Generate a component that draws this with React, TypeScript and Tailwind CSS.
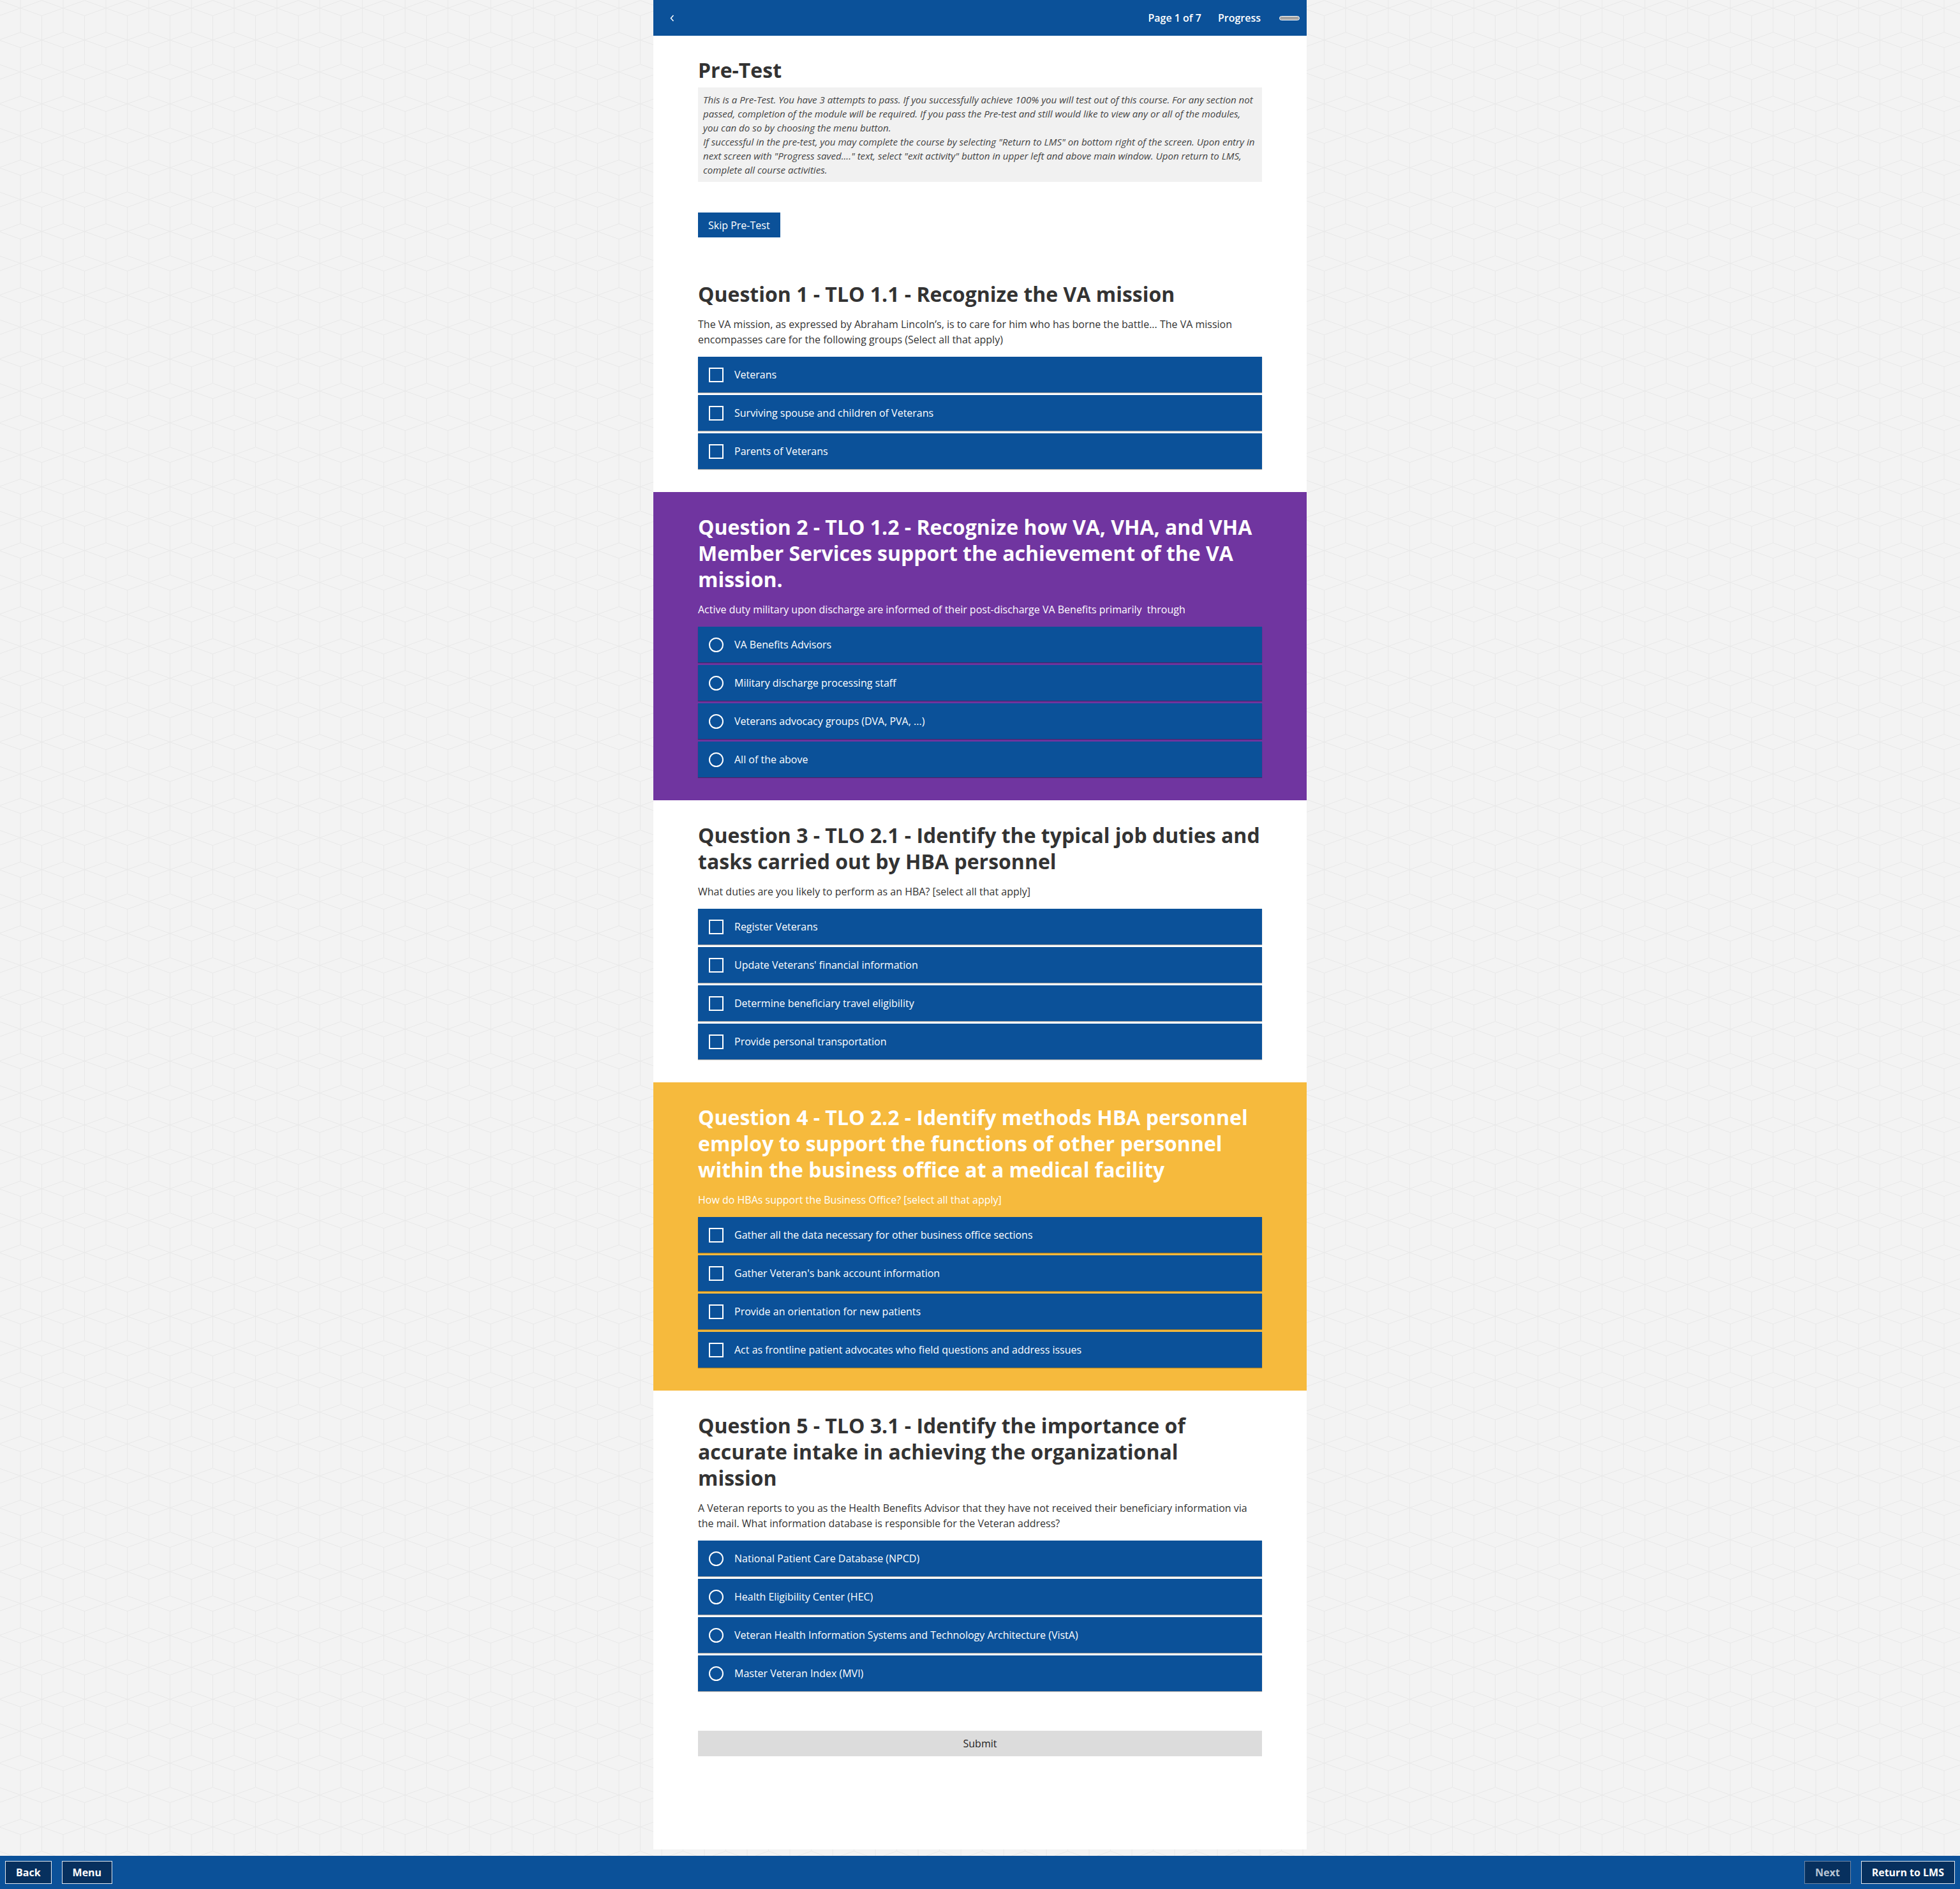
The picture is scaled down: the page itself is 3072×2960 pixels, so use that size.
import React from "react";

type Kind = "checkbox" | "radio";

interface Question {
  title: string;
  prompt: string;
  kind: Kind;
  options: string[];
  tone: "white" | "purple" | "yellow";
}

const questions: Question[] = [
  {
    title: "Question 1 - TLO 1.1 - Recognize the VA mission",
    prompt:
      "The VA mission, as expressed by Abraham Lincoln’s, is to care for him who has borne the battle... The VA mission encompasses care for the following groups (Select all that apply)",
    kind: "checkbox",
    options: ["Veterans", "Surviving spouse and children of Veterans", "Parents of Veterans"],
    tone: "white",
  },
  {
    title:
      "Question 2 - TLO 1.2 - Recognize how VA, VHA, and VHA Member Services support the achievement of the VA mission.",
    prompt:
      "Active duty military upon discharge are informed of their post-discharge VA Benefits primarily\u00a0 through",
    kind: "radio",
    options: [
      "VA Benefits Advisors",
      "Military discharge processing staff",
      "Veterans advocacy groups (DVA, PVA, ...)",
      "All of the above",
    ],
    tone: "purple",
  },
  {
    title: "Question 3 - TLO 2.1 - Identify the typical job duties and tasks carried out by HBA personnel",
    prompt: "What duties are you likely to perform as an HBA? [select all that apply]",
    kind: "checkbox",
    options: [
      "Register Veterans",
      "Update Veterans' financial information",
      "Determine beneficiary travel eligibility",
      "Provide personal transportation",
    ],
    tone: "white",
  },
  {
    title:
      "Question 4 - TLO 2.2 - Identify methods HBA personnel employ to support the functions of other personnel within the business office at a medical facility",
    prompt: "How do HBAs support the Business Office? [select all that apply]",
    kind: "checkbox",
    options: [
      "Gather all the data necessary for other business office sections",
      "Gather Veteran's bank account information",
      "Provide an orientation for new patients",
      "Act as frontline patient advocates who field questions and address issues",
    ],
    tone: "yellow",
  },
  {
    title:
      "Question 5 - TLO 3.1 - Identify the importance of accurate intake in achieving the organizational mission",
    prompt:
      "A Veteran reports to you as the Health Benefits Advisor that they have not received their beneficiary information via the mail. What information database is responsible for the Veteran address?",
    kind: "radio",
    options: [
      "National Patient Care Database (NPCD)",
      "Health Eligibility Center (HEC)",
      "Veteran Health Information Systems and Technology Architecture (VistA)",
      "Master Veteran Index (MVI)",
    ],
    tone: "white",
  },
];

const toneClass = {
  white: "bg-white text-[#333333]",
  purple: "bg-[#7035a0] text-white",
  yellow: "bg-[#f6ba3d] text-white",
};

const Option = ({ label, kind }: { label: string; kind: Kind }) => (
  <div className="flex h-[56px] items-center bg-[#0b5199] pl-[17px] shadow-[0_1px_1px_rgba(0,0,0,0.35)]">
    <span
      className={
        kind === "radio"
          ? "h-[23px] w-[23px] shrink-0 rounded-full border-2 border-white"
          : "h-[23px] w-[23px] shrink-0 border-2 border-white"
      }
    />
    <span className="ml-[17px] text-[16px] text-white">{label}</span>
  </div>
);

const QuestionBlock = ({ q, first }: { q: Question; first?: boolean }) => (
  <section className={`px-[70px] pb-[36px] ${first ? "pt-[68px]" : "pt-[34px]"} ${toneClass[q.tone]}`}>
    <h2 className="text-[32px] font-bold leading-[41px]">{q.title}</h2>
    <p className="mt-[15px] text-[16px] leading-[24px]">{q.prompt}</p>
    <div className="mt-[15px] flex flex-col gap-[4px]">
      {q.options.map((o) => (
        <Option key={o} label={o} kind={q.kind} />
      ))}
    </div>
  </section>
);

const Backdrop = () => (
  <svg className="absolute inset-0 h-full w-full" aria-hidden="true">
    <defs>
      <pattern id="cubes" x="32" y="0" width="67" height="100" patternUnits="userSpaceOnUse">
        <path
          d="M0 12.7 L33.5 0.7 L67 12.7 L33.5 24.7 Z M0 50.7 L33.5 62.7 L0 74.7 M67 50.7 L33.5 62.7 L67 74.7 M0 12.7 V50.7 M67 12.7 V50.7 M33.5 24.7 V100 M0 74.7 V100 M67 74.7 V100 M0 0 V12.7 M67 0 V12.7"
          fill="none"
          stroke="#e8e8e8"
          strokeWidth="1"
        />
      </pattern>
    </defs>
    <rect width="100%" height="100%" fill="url(#cubes)" />
  </svg>
);

const FooterButton = ({ label, muted }: { label: string; muted?: boolean }) => (
  <button
    type="button"
    className={`h-[36px] border bg-[#07305e] px-4 text-[16px] font-bold ${
      muted ? "border-[#6f87a6] text-[#b9c5d4]" : "border-[#e4e9ef] text-white"
    }`}
  >
    {label}
  </button>
);

export default function App() {
  return (
    <div className="relative flex h-screen flex-col bg-[#f3f3f3] font-['Open_Sans',sans-serif]">
      <Backdrop />
      <div className="relative flex min-h-0 flex-1 justify-center pb-[10px]">
        <div className="flex w-[1024px] flex-col overflow-hidden bg-white">
          <header className="flex h-[56px] shrink-0 items-center bg-[#0b5199] pl-[26px] pr-[11px] text-white">
            <svg width="7" height="11" viewBox="0 0 7 11" fill="none">
              <path d="M5.5 1 L1.5 5.5 L5.5 10" stroke="white" strokeWidth="1.5" />
            </svg>
            <div className="ml-auto flex items-center text-[16px] font-semibold">
              <span>Page 1 of 7</span>
              <span className="ml-[26px]">Progress</span>
              <span className="ml-[29px] h-[7px] w-[32px] rounded-full border border-white bg-[#a3a3a3]" />
            </div>
          </header>

          <div className="px-[70px] pt-[33px] text-[#333333]">
            <h1 className="text-[32px] font-bold leading-[41px]">Pre-Test</h1>
            <div className="mt-[7px] bg-[#f1f1f1] p-2 text-[15.1px] italic leading-[22px] text-[#444444]">
              <p>
                This is a Pre-Test. You have 3 attempts to pass. If you successfully achieve 100% you will
                test out of this course. For any section not passed, completion of the module will be
                required. If you pass the Pre-test and still would like to view any or all of the modules,
                you can do so by choosing the menu button.
              </p>
              <p>
                If successful in the pre-test, you may complete the course by selecting "Return to LMS" on
                bottom right of the screen. Upon entry in next screen with "Progress saved...." text, select
                "exit activity" button in upper left and above main window. Upon return to LMS, complete all
                course activities.
              </p>
            </div>
            <button type="button" className="mt-[48px] h-[39px] bg-[#0b5199] px-4 text-[16px] text-white">
              Skip Pre-Test
            </button>
          </div>

          {questions.map((q, i) => (
            <QuestionBlock key={q.title} q={q} first={i === 0} />
          ))}

          <div className="px-[70px] pt-[26px]">
            <button type="button" className="h-[40px] w-full bg-[#dcdcdc] text-[16px] text-[#222222]">
              Submit
            </button>
          </div>
        </div>
      </div>

      <footer className="relative flex h-[52px] shrink-0 items-center bg-[#0b5199] px-2">
        <div className="flex gap-4">
          <FooterButton label="Back" />
          <FooterButton label="Menu" />
        </div>
        <div className="ml-auto flex gap-4">
          <FooterButton label="Next" muted />
          <FooterButton label="Return to LMS" />
        </div>
      </footer>
    </div>
  );
}
